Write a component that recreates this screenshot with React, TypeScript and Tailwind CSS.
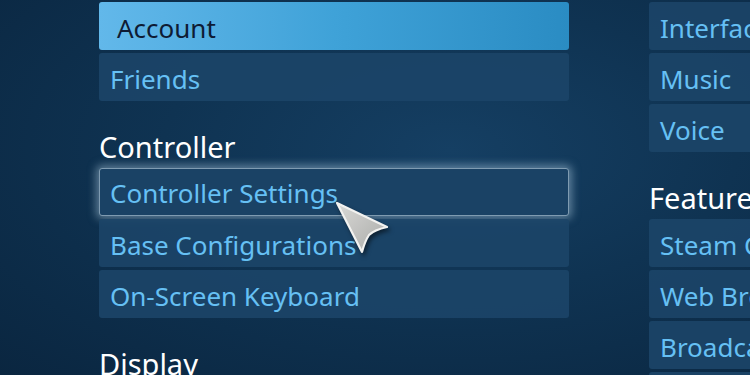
import React from "react";

type Item = { kind: "row" | "header"; label: string; state?: "active" | "focus" };

const left: Item[] = [
  { kind: "row", label: "Account", state: "active" },
  { kind: "row", label: "Friends" },
  { kind: "header", label: "Controller" },
  { kind: "row", label: "Controller Settings", state: "focus" },
  { kind: "row", label: "Base Configurations" },
  { kind: "row", label: "On-Screen Keyboard" },
  { kind: "header", label: "Display" },
];

const right: Item[] = [
  { kind: "row", label: "Interface" },
  { kind: "row", label: "Music" },
  { kind: "row", label: "Voice" },
  { kind: "header", label: "Features" },
  { kind: "row", label: "Steam Cloud" },
  { kind: "row", label: "Web Browser" },
  { kind: "row", label: "Broadcasting" },
  { kind: "row", label: "In-Game" },
];

function Row({ item }: { item: Item }) {
  if (item.kind === "header") {
    return (
      <div className="h-[61px] shrink-0 flex items-end pb-[1px] text-[29px] leading-[34px] text-white whitespace-nowrap">
        {item.label}
      </div>
    );
  }
  if (item.state === "active") {
    return (
      <div className="h-[48px] shrink-0 rounded-[3px] flex items-center pl-[18px] pt-[4px] text-[26px] text-[#0e1b34] bg-gradient-to-r from-[#62b8ea] via-[#3fa2d8] to-[#2a8cc3] whitespace-nowrap">
        {item.label}
      </div>
    );
  }
  if (item.state === "focus") {
    return (
      <div className="h-[48px] shrink-0 rounded-[3px] flex items-center pl-[10px] pt-[2px] text-[26px] text-[#66c0f4] bg-[#1a4265] border border-[#7f9bb1] shadow-[0_0_8px_3px_rgba(170,200,220,0.5)] whitespace-nowrap">
        {item.label}
      </div>
    );
  }
  return (
    <div className="h-[48px] shrink-0 rounded-[3px] flex items-center pl-[11px] pt-[4px] text-[26px] text-[#66c0f4] bg-[#1c4568]/90 whitespace-nowrap overflow-hidden">
      {item.label}
    </div>
  );
}

function Cursor() {
  return (
    <svg
      className="absolute left-[333px] top-[199px] drop-shadow-[2px_3px_2px_rgba(0,0,0,0.5)]"
      width="60"
      height="60"
      viewBox="0 0 60 60"
    >
      <defs>
        <linearGradient id="cg" x1="0" y1="0" x2="1" y2="1">
          <stop offset="0" stopColor="#d9d9d6" />
          <stop offset="1" stopColor="#a9aaa8" />
        </linearGradient>
      </defs>
      <path
        d="M4 4 L54 28 Q41 31 36 36 Q32 42 29 53 Z"
        fill="url(#cg)"
        stroke="#f2f2f0"
        strokeWidth="2.2"
        strokeLinejoin="round"
      />
    </svg>
  );
}

export default function App() {
  return (
    <div
      className="relative w-[750px] h-[375px] overflow-hidden bg-[radial-gradient(ellipse_at_60%_40%,#153f63_0%,#0f3352_45%,#0a2640_100%)]"
      style={{ fontFamily: '"Noto Sans", "Open Sans", sans-serif' }}
    >
      <div className="flex gap-[80px] pl-[99px] pt-[2px]">
        <div className="w-[470px] shrink-0 flex flex-col gap-[3px]">
          {left.map((it) => (
            <Row key={it.label} item={it} />
          ))}
        </div>
        <div className="w-[200px] shrink-0 flex flex-col gap-[3px]">
          {right.map((it) => (
            <Row key={it.label} item={it} />
          ))}
        </div>
      </div>
      <Cursor />
    </div>
  );
}
